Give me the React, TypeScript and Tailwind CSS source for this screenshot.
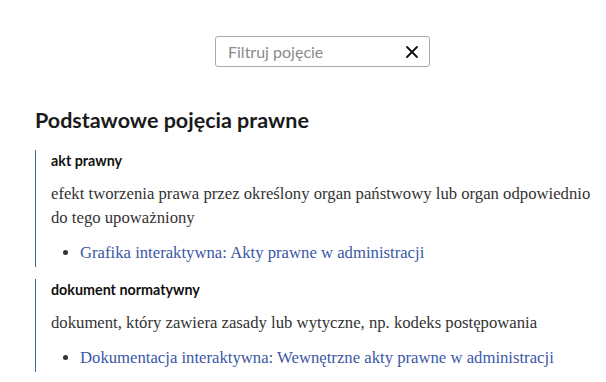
import { X } from "lucide-react";

const terms = [
    {
        term: "akt prawny",
        definition: "efekt tworzenia prawa przez określony organ państwowy lub organ odpowiednio do tego upoważniony",
        links: ["Grafika interaktywna: Akty prawne w administracji"],
    },
    {
        term: "dokument normatywny",
        definition: "dokument, który zawiera zasady lub wytyczne, np. kodeks postępowania",
        links: ["Dokumentacja interaktywna: Wewnętrzne akty prawne w administracji"],
    },
];

export default function App() {
    return (
        <div className="min-h-screen bg-white font-['Lato',sans-serif] text-[#222]">
            {/* Filter */}
            <div className="pt-[36px] pl-[215px]">
                <div className="w-[215px] h-[31px] border border-[#a9a9a9] rounded-[3px] flex items-center pl-[12px] pr-[7px]">
                    <span className="flex-1 text-[16px] leading-[20px] text-[#8a8a8a]">Filtruj pojęcie</span>
                    <X size={20} strokeWidth={2.2} className="text-[#111]" />
                </div>
            </div>

            {/* Glossary */}
            <div className="pl-[35px] pr-[10px]">
                <h2 className="mt-[39px] text-[21.5px] leading-[28px] font-bold text-[#1a1a1a]">Podstawowe pojęcia prawne</h2>
                <div className="mt-[16px] flex flex-col gap-[12px]">
                    {terms.map((t) => (
                        <div key={t.term} className="border-l border-[#3b6f9e] pl-[15px] pb-[2px]">
                            <div className="pt-[1px] text-[14.3px] leading-[20px] font-bold text-[#111]">{t.term}</div>
                            <p className="mt-[11px] font-['Liberation_Serif',serif] text-[16.7px] leading-[24px] text-[#333]">{t.definition}</p>
                            <ul className="mt-[11px] pl-[29px] list-disc font-['Liberation_Serif',serif] text-[16.7px] leading-[24px] text-[#333]">
                                {t.links.map((l) => (
                                    <li key={l}>
                                        <a href="#" className="text-[#3a57a6]">{l}</a>
                                    </li>
                                ))}
                            </ul>
                        </div>
                    ))}
                </div>
            </div>
        </div>
    );
}
